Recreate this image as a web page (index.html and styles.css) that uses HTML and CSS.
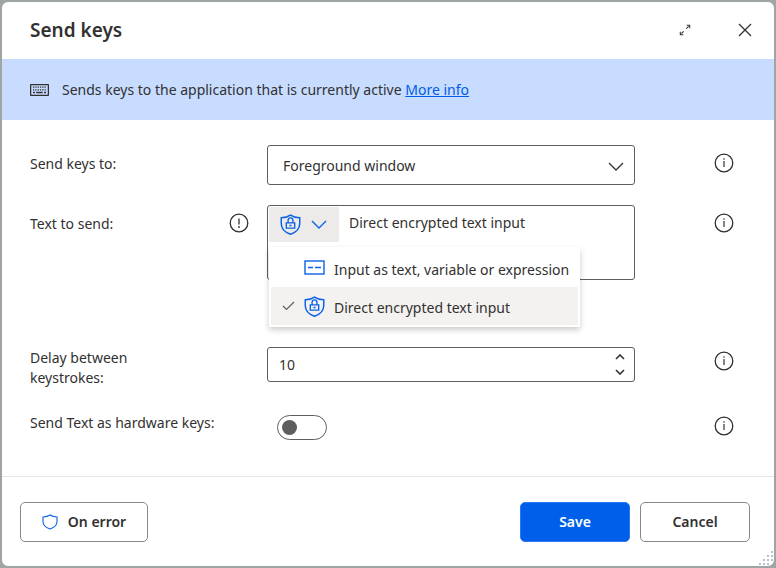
FILE: index.html
```html
<!DOCTYPE html>
<html lang="en">
<head>
  <meta charset="UTF-8">
  <title>Send keys</title>
  <link rel="stylesheet" href="styles.css">
</head>
<body>

  <!-- shared icons -->
  <svg class="sprite" aria-hidden="true">
    <symbol id="icon-info" viewBox="0 0 20 20">
      <circle cx="10" cy="10" r="8.8" fill="none" stroke="currentColor" stroke-width="1.3"/>
      <path d="M10 8v6" stroke="currentColor" stroke-width="1.2"/>
      <circle cx="10" cy="6" r="0.8" fill="currentColor"/>
    </symbol>
    <symbol id="icon-shield-lock" viewBox="0 0 20 20">
      <path d="M10 1C7.5 2.8 4.5 3.5 1.2 3.6V9c0 5 3.3 8.3 8.8 10.3 5.5-2 8.8-5.3 8.8-10.3V3.6C15.5 3.5 12.5 2.800 10 1z" fill="none" stroke="currentColor" stroke-width="1.4"/>
      <path d="M6 8.500h8v5H6zM7.700 8.500V6a2.300 2.300 0 0 1 4.600 0v2.500M9 11h2" fill="none" stroke="currentColor" stroke-width="1.300"/>
    </symbol>
  </svg>

  <form class="dialog">
    <header class="header">
      <h1>Send keys</h1>
      <button type="button" class="icon-button" aria-label="Expand">
        <svg width="12" height="12" viewBox="0 0 14 14" fill="none" stroke="currentColor" stroke-width="1.2">
          <path d="M8.5 5.5l4-4M5.5 8.5l-4 4" stroke-dasharray="4 1"/>
          <path d="M9 1.5h3.5V5M5 12.5H1.5V9"/>
        </svg>
      </button>
      <button type="button" class="icon-button" aria-label="Close">
        <svg width="14" height="14" viewBox="0 0 14 14" fill="none" stroke="currentColor" stroke-width="1.3">
          <path d="M1 1l12 12M13 1L1 13"/>
        </svg>
      </button>
    </header>

    <div class="banner">
      <svg width="19" height="12" viewBox="0 0 19 12" fill="none" stroke="currentColor">
        <rect x="0.6" y="0.6" width="17.8" height="10.8" rx="0.5" stroke-width="1.3"/>
        <path d="M3 3.2h13.5M3 5.8h13.5" stroke-width="1.3" stroke-dasharray="1.3 1"/>
        <path d="M3 8.5h2M6.2 8.5h6.5M14 8.5h2" stroke-width="1.3"/>
      </svg>
      <p>Sends keys to the application that is currently active <a href="#">More info</a></p>
    </div>

    <div class="fields">
      <div class="row">
        <label for="target">Send keys to:</label>
        <div class="select-box">
          <select id="target">
            <option>Foreground window</option>
          </select>
          <svg class="chevron" width="16" height="9" viewBox="0 0 16 9" fill="none" stroke="currentColor" stroke-width="1.3"><path d="M1 1l7 7 7-7"/></svg>
        </div>
        <button type="button" class="icon-button info" aria-label="Info"><svg><use href="#icon-info"/></svg></button>
      </div>

      <div class="row row-text">
        <div class="label-group">
          <label for="text">Text to send:</label>
          <svg class="alert" viewBox="0 0 20 20" role="img" aria-label="Required">
            <circle cx="10" cy="10" r="8.8" fill="none" stroke="currentColor" stroke-width="1.3"/>
            <path d="M10 5.5v6" stroke="currentColor" stroke-width="1.3"/>
            <circle cx="10" cy="14" r="0.9" fill="currentColor"/>
          </svg>
        </div>
        <div class="text-box">
          <button type="button" class="mode" aria-label="Input mode" aria-expanded="true">
            <svg width="21" height="21"><use href="#icon-shield-lock"/></svg>
            <svg width="16" height="9" viewBox="0 0 16 9" fill="none" stroke="currentColor" stroke-width="1.4"><path d="M1 1l7 7 7-7"/></svg>
          </button>
          <textarea id="text">Direct encrypted text input</textarea>
          <div class="menu" role="menu">
            <button type="button" class="menu-item" role="menuitemradio" aria-checked="false">
              <span class="check"></span>
              <svg width="21" height="21" viewBox="0 0 21 21" fill="none" stroke="currentColor" stroke-width="1.4">
                <rect x="1" y="3" width="19" height="13"/>
                <path d="M4 9.5h5M11 9.5h6"/>
              </svg>
              <span class="menu-text">Input as text, variable or expression</span>
            </button>
            <button type="button" class="menu-item selected" role="menuitemradio" aria-checked="true">
              <span class="check">
                <svg width="13" height="10" viewBox="0 0 13 10" fill="none" stroke="currentColor" stroke-width="1.2"><path d="M1 5l3.5 3.5L12 1"/></svg>
              </span>
              <svg width="21" height="21"><use href="#icon-shield-lock"/></svg>
              <span class="menu-text">Direct encrypted text input</span>
            </button>
          </div>
        </div>
        <button type="button" class="icon-button info" aria-label="Info"><svg><use href="#icon-info"/></svg></button>
      </div>

      <div class="row row-delay">
        <label for="delay">Delay between keystrokes:</label>
        <div class="number-box">
          <input type="text" id="delay" inputmode="numeric" value="10">
          <div class="spin">
            <button type="button" aria-label="Increase"><svg width="10" height="6" viewBox="0 0 10 6" fill="none" stroke="currentColor" stroke-width="1.6"><path d="M1 5l4-4 4 4"/></svg></button>
            <button type="button" aria-label="Decrease"><svg width="10" height="6" viewBox="0 0 10 6" fill="none" stroke="currentColor" stroke-width="1.6"><path d="M1 1l4 4 4-4"/></svg></button>
          </div>
        </div>
        <button type="button" class="icon-button info" aria-label="Info"><svg><use href="#icon-info"/></svg></button>
      </div>

      <div class="row row-toggle">
        <label for="hardware">Send Text as hardware keys:</label>
        <input type="checkbox" role="switch" id="hardware" class="toggle">
        <button type="button" class="icon-button info" aria-label="Info"><svg><use href="#icon-info"/></svg></button>
      </div>
    </div>

    <footer class="footer">
      <button type="button" class="btn btn-error">
        <svg width="16" height="16" viewBox="0 0 16 16" fill="none" stroke="#0b62e8" stroke-width="1.1"><path d="M8 1C6 2.3 3.8 2.9 1 3v4.5c0 3.5 2.5 6 7 7.5 4.5-1.5 7-4 7-7.5V3C12.2 2.9 10 2.3 8 1z"/></svg>
        On error
      </button>
      <button type="submit" class="btn btn-primary">Save</button>
      <button type="button" class="btn">Cancel</button>
    </footer>

    <svg class="grip" width="15" height="15" viewBox="0 0 15 15" fill="#b4bfd3" aria-hidden="true">
      <path d="M12 0h2v2h-2zM8 4h2v2H8zM12 4h2v2h-2zM4 8h2v2H4zM8 8h2v2H8zM12 8h2v2h-2zM0 12h2v2H0zM4 12h2v2H4zM8 12h2v2H8z"/>
    </svg>
  </form>

</body>
</html>
```
FILE: styles.css
```css
* {
  box-sizing: border-box;
}

body {
  margin: 0;
  background: #9fa5a2;
  color: #323130;
  font-family: "Noto Sans", "Open Sans", sans-serif;
  font-size: 14px;
  line-height: 20px;
}

button,
input,
select,
textarea {
  font: inherit;
  color: inherit;
}

button {
  cursor: pointer;
}

.sprite {
  position: absolute;
  width: 0;
  height: 0;
}

.dialog {
  position: relative;
  display: flex;
  flex-direction: column;
  min-height: 100vh;
  border: 2px solid #9fa5a2;
  border-radius: 8px;
  background: white;
}

.header {
  display: flex;
  align-items: center;
  gap: 36px;
  height: 57px;
  padding: 0 17px 2px 28px;
}

.header h1 {
  flex: 1;
  margin: 0;
  font-size: 19px;
  font-weight: 600;
}

.icon-button {
  display: flex;
  align-items: center;
  justify-content: center;
  width: 24px;
  height: 24px;
  padding: 0;
  border: none;
  background: none;
}

.banner {
  display: flex;
  align-items: center;
  gap: 13px;
  min-height: 61px;
  padding: 0 28px;
  background: #c7dcff;
}

.banner p {
  margin: 0;
}

.banner a {
  color: #005ce6;
}

.fields {
  display: flex;
  flex: 1;
  flex-direction: column;
  gap: 20px;
  padding: 25px 40px 20px 28px;
}

.row {
  display: grid;
  grid-template-columns: 237px 1fr 20px;
  align-items: start;
}

.row > label,
.label-group > label {
  padding-top: 9px;
}

.label-group {
  display: flex;
  justify-content: space-between;
  padding-right: 18px;
}

.alert {
  margin-top: 8px;
}

.row .info {
  width: 20px;
  height: 20px;
  margin-top: 8px;
}

.info svg,
.alert {
  width: 20px;
  height: 20px;
}

.select-box,
.text-box,
.number-box {
  position: relative;
  display: flex;
  margin-right: 79px;
  border: 1px solid #605e5c;
  border-radius: 3px;
}

.select-box select {
  width: 100%;
  height: 38px;
  padding: 1px 40px 0 15px;
  border: none;
  background: none;
  appearance: none;
}

.chevron {
  position: absolute;
  top: 16px;
  right: 10px;
  pointer-events: none;
}

.row-text {
  min-height: 122px;
}

.text-box {
  height: 75px;
  padding: 1px;
}

.mode {
  display: flex;
  align-items: center;
  gap: 10px;
  width: 70px;
  height: 35px;
  padding: 0 11px;
  border: none;
  background: #edebe9;
  color: #0b62e8;
}

.text-box textarea {
  flex: 1;
  min-width: 0;
  padding: 6px 10px;
  border: none;
  outline: none;
  background: none;
  resize: none;
}

.menu {
  position: absolute;
  top: 41px;
  left: 1px;
  z-index: 1;
  width: 311px;
  padding: 2px;
  background: white;
  box-shadow: 0 3px 6px rgba(0, 0, 0, 0.2);
}

.menu-item {
  display: flex;
  align-items: center;
  gap: 9px;
  width: 100%;
  height: 38px;
  padding: 0 8px 0 11px;
  border: none;
  background: none;
  white-space: nowrap;
}

.menu-item.selected {
  background: #f3f2f1;
}

.menu-item > svg {
  flex: none;
  color: #0b62e8;
}

.menu-text {
  padding-top: 3px;
}

.check {
  display: flex;
  width: 13px;
  color: #605e5c;
}

.row-delay {
  min-height: 45px;
}

.row.row-delay > label,
.row.row-toggle > label {
  padding-top: 1px;
}

.row-delay > label {
  max-width: 140px;
}

.number-box {
  height: 35px;
}

.number-box input {
  flex: 1;
  min-width: 0;
  padding: 0 11px;
  border: none;
  outline: none;
  background: none;
}

.spin {
  display: flex;
  flex-direction: column;
  width: 28px;
  padding: 1px 0;
}

.spin button {
  display: flex;
  flex: 1;
  align-items: center;
  justify-content: center;
  padding: 0;
  border: none;
  background: none;
}

.row.row-delay .info,
.row.row-toggle .info {
  margin-top: 4px;
}

.toggle {
  width: 50px;
  height: 25px;
  margin: 3px 0 0 10px;
  padding: 4px;
  border: 1px solid #605e5c;
  border-radius: 13px;
  appearance: none;
}

.toggle::before {
  content: "";
  display: block;
  width: 15px;
  height: 15px;
  border-radius: 50%;
  background: #605e5c;
}

.toggle:checked::before {
  margin-left: auto;
}

.footer {
  display: flex;
  gap: 10px;
  padding: 25px 24px 24px 18px;
  border-top: 1px solid #e6e6e6;
}

.btn {
  display: flex;
  align-items: center;
  justify-content: center;
  gap: 10px;
  width: 110px;
  height: 40px;
  border: 1px solid #8a8886;
  border-radius: 5px;
  background: white;
  font-weight: 600;
}

.btn-error {
  width: 128px;
  margin-right: auto;
}

.btn-primary {
  border-color: #2b78f0;
  background: #005fea;
  color: white;
}

.grip {
  position: absolute;
  right: 0;
  bottom: 0;
}
```
